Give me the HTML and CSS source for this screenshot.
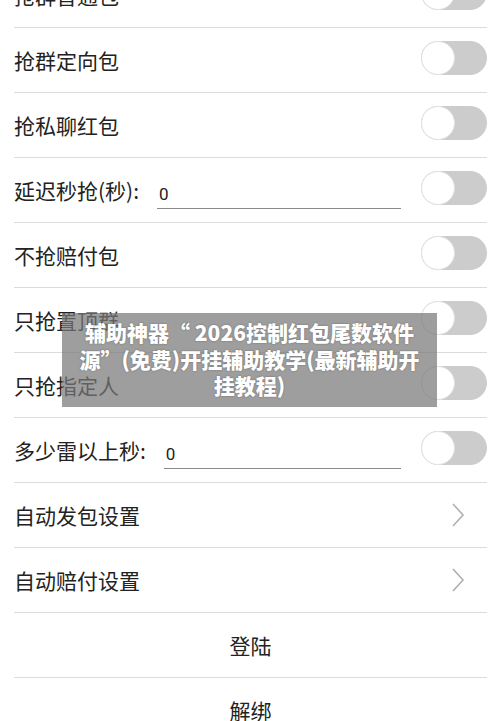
FILE: index.html
```html
<!DOCTYPE html>
<html lang="zh">
<head>
    <meta charset="UTF-8">
    <title>设置</title>
    <link rel="stylesheet" href="styles.css">
</head>
<body>
    <div class="list">
        <div class="row">
            <span class="label">抢群普通包</span>
            <span class="switch"></span>
        </div>
        <div class="row">
            <span class="label">抢群定向包</span>
            <span class="switch"></span>
        </div>
        <div class="row">
            <span class="label">抢私聊红包</span>
            <span class="switch"></span>
        </div>
        <div class="row">
            <span class="label">延迟秒抢(秒):</span>
            <span class="field">0</span>
            <span class="switch"></span>
        </div>
        <div class="row">
            <span class="label">不抢赔付包</span>
            <span class="switch"></span>
        </div>
        <div class="row">
            <span class="label">只抢置顶群</span>
            <span class="switch"></span>
        </div>
        <div class="row">
            <span class="label">只抢指定人</span>
            <span class="switch"></span>
        </div>
        <div class="row">
            <span class="label">多少雷以上秒:</span>
            <span class="field">0</span>
            <span class="switch"></span>
        </div>
        <div class="row">
            <span class="label">自动发包设置</span>
            <svg class="chevron" width="14" height="26" viewBox="0 0 14 26"><path d="M2 2 L12 13 L2 24" fill="none" stroke="#b0b0b0" stroke-width="1.6"/></svg>
        </div>
        <div class="row">
            <span class="label">自动赔付设置</span>
            <svg class="chevron" width="14" height="26" viewBox="0 0 14 26"><path d="M2 2 L12 13 L2 24" fill="none" stroke="#b0b0b0" stroke-width="1.6"/></svg>
        </div>
        <div class="row center">登陆</div>
        <div class="row center">解绑</div>
    </div>

    <div class="banner">辅助神器“ 2026控制红包尾数软件源”(免费)开挂辅助教学(最新辅助开挂教程)</div>
</body>
</html>
```

FILE: styles.css
```css
body {
    margin: 0;
    font-family: "Noto Sans CJK SC", "Noto Sans", sans-serif;
    color: #222;
    background: #fff;
    overflow: hidden;
}
.list {
    margin-top: -37px;
    padding: 0 13px 0 14px;
}
.row {
    display: flex;
    align-items: center;
    height: 64px;
    border-bottom: 1.2px solid #dcdcdc;
    font-size: 21px;
}
.row.center {
    justify-content: center;
}
.label {
    white-space: nowrap;
}
.field {
    flex: 1;
    margin: 12px 20px 0 18px;
    padding: 0 0 4px 2px;
    border-bottom: 1.5px solid #8a8a8a;
    font-family: "Roboto", sans-serif;
    font-size: 17px;
    color: #222;
}
.switch {
    position: relative;
    width: 66px;
    height: 34px;
    margin-left: auto;
    margin-top: -4px;
    border-radius: 17px;
    background: #cccccc;
}
.switch::after {
    content: "";
    position: absolute;
    left: 0;
    top: 0;
    width: 32px;
    height: 32px;
    border-radius: 50%;
    background: #fff;
    border: 1px solid #e2e2e2;
}
.chevron {
    margin-left: auto;
    margin-right: 22px;
}
.banner {
    position: absolute;
    left: 62px;
    top: 313px;
    width: 375px;
    height: 94px;
    box-sizing: border-box;
    padding: 6px 16px 0;
    background: rgba(120, 120, 120, 0.72);
    color: #fff;
    font-weight: 900;
    font-size: 21px;
    line-height: 26.5px;
    text-align: center;
    text-shadow: 0 0 2px rgba(0, 0, 0, 0.35);
}
```
